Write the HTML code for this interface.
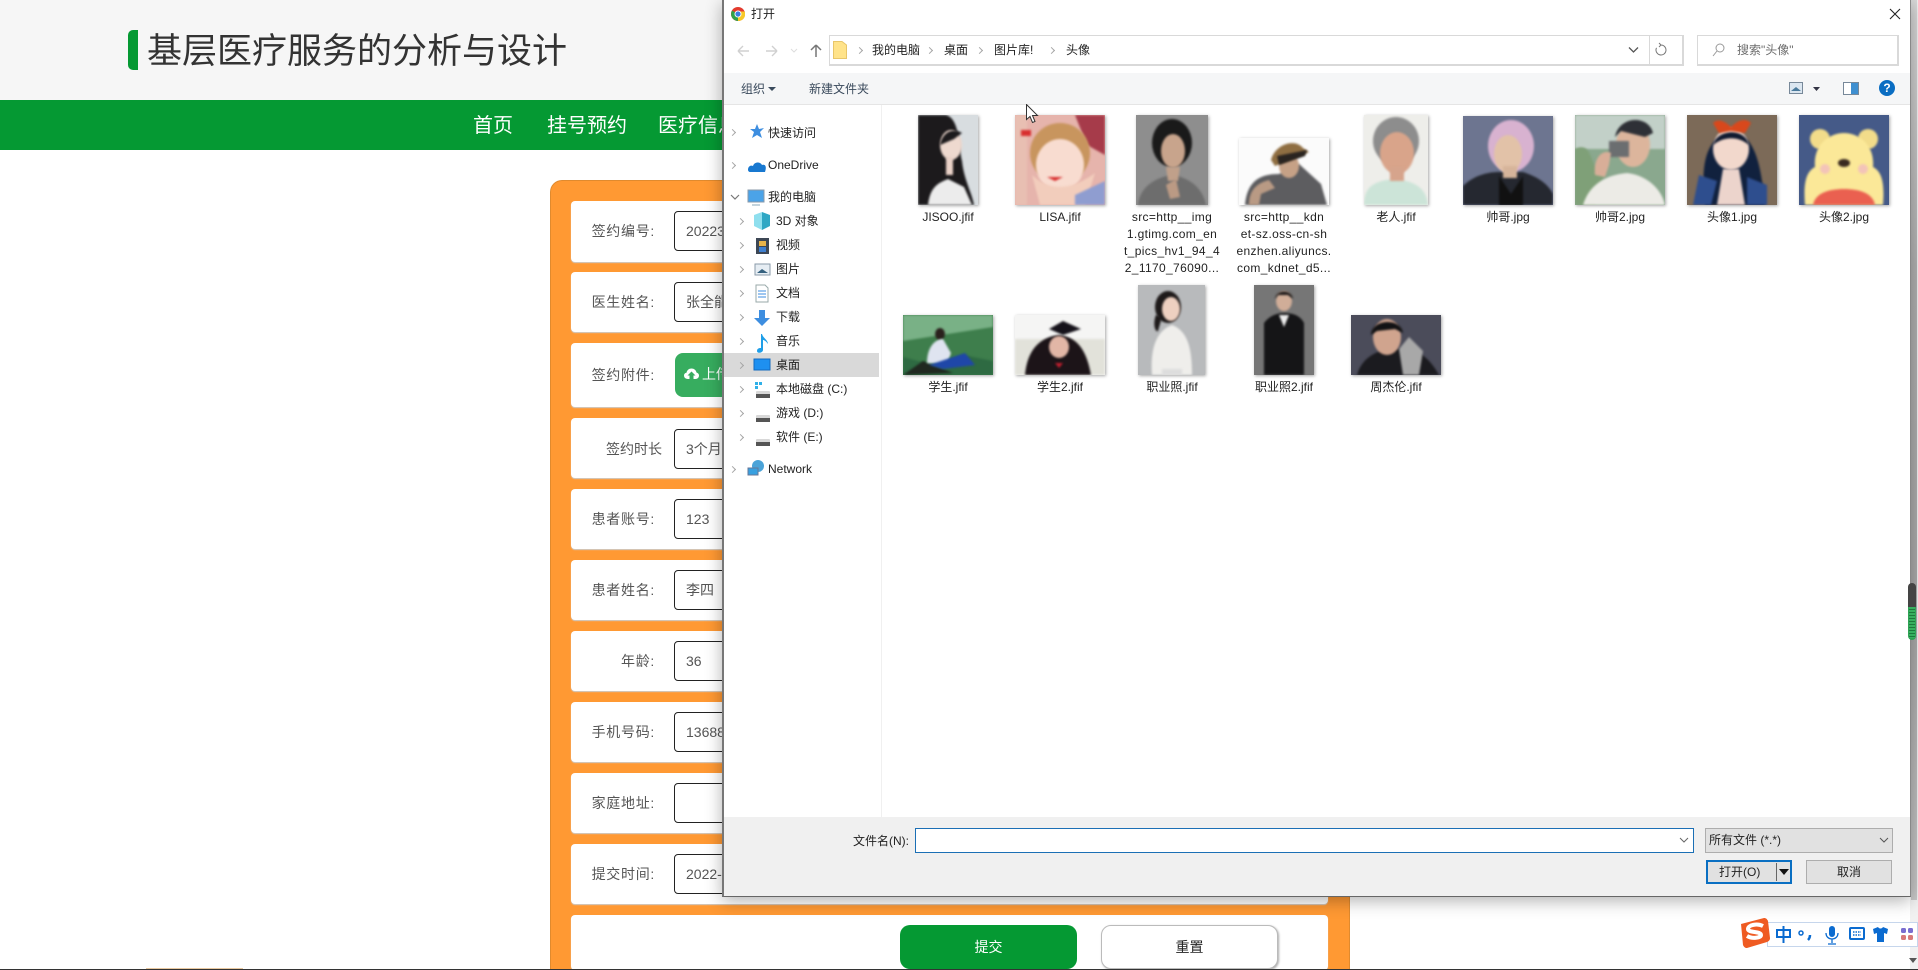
<!DOCTYPE html>
<html lang="zh"><head><meta charset="utf-8"><title>打开</title>
<style>
*{box-sizing:border-box;margin:0;padding:0}
html,body{width:1918px;height:970px;overflow:hidden;background:#fff;font-family:"Liberation Sans","Noto Sans CJK SC",sans-serif}
.a{position:absolute}
.t{position:absolute;white-space:nowrap;line-height:1}
.row{position:absolute;left:571px;width:757px;background:#fff;border-radius:4px;box-shadow:0 1px 1px #ccc}
.lab{position:absolute;font-size:14px;color:#555;white-space:nowrap;line-height:20px;width:92px;text-align:right;left:563px;letter-spacing:.7px}
.inp{position:absolute;left:674px;width:300px;height:40px;border:1px solid #222;border-radius:4px;background:#fff;font-size:14px;color:#555;padding-left:11px;line-height:38px;white-space:nowrap}
#dlg{position:absolute;left:722px;top:0;width:1189px;height:897px;background:#fff;border-left:2px solid #777;border-bottom:1px solid #666;border-right:1px solid #888;box-shadow:0 4px 16px rgba(0,0,0,.3);font-family:"Liberation Sans","Noto Sans CJK SC",sans-serif;font-size:12px;color:#222}
.n{position:absolute;font-size:12px;line-height:16px;color:#222;white-space:nowrap}
.ch{position:absolute;width:5px;height:5px;border-top:1px solid #a6a6a6;border-right:1px solid #a6a6a6;transform:rotate(45deg)}
.th{position:absolute;box-shadow:1px 1px 3px rgba(0,0,0,.35)}
.th>*{filter:blur(1px)}
.th>rect:first-child{filter:none}
.cap{position:absolute;width:112px;text-align:center;font-size:12px;line-height:17px;color:#222;white-space:nowrap}
.lng{letter-spacing:.35px}
</style></head><body>
<!-- page header -->
<div class="a" style="left:0;top:0;width:1918px;height:100px;background:#f6f6f6"></div>
<div class="a" style="left:128px;top:30px;width:10px;height:40px;background:#059933;border-radius:5px 0 0 5px"></div>
<div class="t" style="left:147px;top:34px;font-size:35px;line-height:36px;color:#333">基层医疗服务的分析与设计</div>
<div class="a" style="left:0;top:100px;width:1918px;height:50px;background:#059933"></div>
<div class="t" style="left:473px;top:115px;font-size:20px;line-height:22px;color:#fff">首页</div>
<div class="t" style="left:547px;top:115px;font-size:20px;line-height:22px;color:#fff">挂号预约</div>
<div class="t" style="left:658px;top:115px;font-size:20px;line-height:22px;color:#fff">医疗信息</div>
<!-- form panel -->
<div class="a" style="left:550px;top:180px;width:800px;height:790px;background:#ff9933;border-radius:12px 12px 0 0;border:1px solid #e08a2e;border-bottom:none"></div>
<div class="row" style="top:201px;height:61px"></div>
<div class="row" style="top:272px;height:60px"></div>
<div class="row" style="top:343px;height:64px"></div>
<div class="row" style="top:418px;height:60px"></div>
<div class="row" style="top:489px;height:60px"></div>
<div class="row" style="top:560px;height:60px"></div>
<div class="row" style="top:631px;height:60px"></div>
<div class="row" style="top:702px;height:60px"></div>
<div class="row" style="top:773px;height:60px"></div>
<div class="row" style="top:844px;height:60px"></div>
<div class="row" style="top:915px;height:55px"></div>
<div class="lab" style="top:221px">签约编号:</div><div class="inp" style="top:211px">20223</div>
<div class="lab" style="top:292px">医生姓名:</div><div class="inp" style="top:282px">张全能</div>
<div class="lab" style="top:365px">签约附件:</div>
<div class="a" style="left:675px;top:353px;width:120px;height:44px;background:#37ad5f;border-radius:8px"></div>
<svg class="a" style="left:684px;top:368px" width="15" height="13" viewBox="0 0 15 13"><path d="M4 11C1 11 0 9 0 7.500C0 6 1 5 2.500 4.800C3 2 5 0.500 7.500 0.500C10 0.500 12 2 12.500 4.500C14 5 15 6 15 7.500C15 9.500 13.500 11 11.500 11H9.500V7.500H11.500L7.500 3.500L3.500 7.500H5.500V11Z" fill="#fff"/></svg>
<div class="t" style="left:702px;top:367px;font-size:14px;color:#fff">上传</div>
<div class="lab" style="top:439px;left:570px;letter-spacing:0">签约时长</div><div class="inp" style="top:429px">3个月</div>
<div class="lab" style="top:509px">患者账号:</div><div class="inp" style="top:499px">123</div>
<div class="lab" style="top:580px">患者姓名:</div><div class="inp" style="top:570px">李四</div>
<div class="lab" style="top:651px">年龄:</div><div class="inp" style="top:641px">36</div>
<div class="lab" style="top:722px">手机号码:</div><div class="inp" style="top:712px">13688</div>
<div class="lab" style="top:793px">家庭地址:</div><div class="inp" style="top:783px"></div>
<div class="lab" style="top:864px">提交时间:</div><div class="inp" style="top:854px">2022-</div>
<div class="a" style="left:900px;top:925px;width:177px;height:44px;background:#059933;border-radius:10px;color:#fff;font-size:14px;text-align:center;line-height:44px">提交</div>
<div class="a" style="left:1101px;top:925px;width:177px;height:44px;background:#fff;border:1px solid #bbb;border-radius:10px;box-shadow:1px 1px 2px #aaa;color:#222;font-size:14px;text-align:center;line-height:42px">重置</div>
<!-- page scrollbar -->
<div class="a" style="left:1910px;top:0;width:8px;height:970px;background:#f1f1f1"></div>
<div class="a" style="left:1911px;top:0;width:6px;height:900px;background:linear-gradient(#d8d8d8,#b0b0b0 30%,#a8a8a8 70%,#c8c8c8)"></div>
<div class="a" style="left:1908px;top:583px;width:8px;height:57px;border-radius:4px;background:linear-gradient(#444 0,#444 42%,#2fa355 42%,#2fa355 100%);z-index:3"></div>
<div class="a" style="left:1909px;top:607px;width:6px;height:31px;background:repeating-linear-gradient(#37b060 0 2px,#1d7a3d 2px 3px);z-index:4"></div>
<div class="a" style="left:1909px;top:958px;width:0;height:0;border:4px solid transparent;border-top:5px solid #555"></div>
<!-- bottom line -->
<div class="a" style="left:0;top:969px;width:1918px;height:1px;background:#333;z-index:9"></div>
<div class="a" style="left:146px;top:968px;width:97px;height:1px;background:#e8c8a0;z-index:9"></div>
<!-- dialog -->
<div id="dlg">
<svg class="a" style="left:7px;top:7px" width="14" height="14" viewBox="0 0 14 14"><circle cx="7" cy="7" r="7" fill="#e33b2e"/><path d="M7 7L1 3.500A7 7 0 0 0 7 14Z" fill="#2fa24a"/><path d="M7 7V14A7 7 0 0 0 13.800 4.500H7Z" fill="#f7c829"/><circle cx="7" cy="7" r="3.500" fill="#fff"/><circle cx="7" cy="7" r="2.600" fill="#3b7de0"/></svg>
<div class="n" style="left:27px;top:6px">打开</div>
<svg class="a" style="left:1164px;top:7px" width="14" height="14" viewBox="0 0 14 14"><path d="M2 2L12 12M12 2L2 12" stroke="#222" stroke-width="1.100"/></svg>
<!-- nav row -->
<svg class="a" style="left:12px;top:42px" width="90" height="18" viewBox="0 0 90 18"><path d="M2 9H13M2 9L7 4M2 9L7 14" stroke="#d0d0d0" stroke-width="1.400" fill="none"/><path d="M30 9H41M41 9L36 4M41 9L36 14" stroke="#d0d0d0" stroke-width="1.400" fill="none"/><path d="M55 7L58 10L61 7" stroke="#ddd" fill="none"/><path d="M74 15V3M74 3L69 8M74 3L79 8" stroke="#777" stroke-width="1.500" fill="none" transform="translate(6 0)"/></svg>
<div class="a" style="left:105px;top:35px;width:855px;height:31px;border:1px solid #d9d9d9;border-width:1px 2px 2px 1px;background:#fff"></div>
<div class="a" style="left:925px;top:35px;width:1px;height:31px;background:#d9d9d9"></div>
<div class="a" style="left:973px;top:35px;width:202px;height:31px;border:1px solid #d9d9d9;border-width:1px 2px 2px 1px"></div>
<svg class="a" style="left:109px;top:41px" width="14" height="18" viewBox="0 0 14 18"><path d="M.5 .5H9L13.500 4V17.500H.5Z" fill="#ffe38a" stroke="#e8c66a"/></svg>
<div class="ch" style="left:133px;top:48px"></div><div class="n" style="left:148px;top:42px">我的电脑</div>
<div class="ch" style="left:203px;top:48px"></div><div class="n" style="left:220px;top:42px">桌面</div>
<div class="ch" style="left:253px;top:48px"></div><div class="n" style="left:270px;top:42px">图片库!</div>
<div class="ch" style="left:325px;top:48px"></div><div class="n" style="left:342px;top:42px">头像</div>
<svg class="a" style="left:904px;top:46px" width="11" height="8" viewBox="0 0 11 8"><path d="M1 1.500L5.500 6L10 1.500" stroke="#555" stroke-width="1.300" fill="none"/></svg>
<svg class="a" style="left:931px;top:42px" width="12" height="15" viewBox="0 0 12 15"><path d="M6 3A5 5 0 1 1 1.500 5.800M6 3L4 1M6 3L4 5" stroke="#777" fill="none"/></svg>
<svg class="a" style="left:988px;top:43px" width="13" height="14" viewBox="0 0 13 14"><circle cx="8" cy="5" r="4" stroke="#999" fill="none"/><path d="M5 8L1 13" stroke="#999"/></svg>
<div class="n" style="left:1013px;top:42px;color:#6d6d6d">搜索"头像"</div>
<!-- toolbar -->
<div class="a" style="left:0;top:73px;width:1186px;height:32px;background:#f5f6f7;border-bottom:1px solid #e5e5e5"></div>
<div class="n" style="left:17px;top:81px;color:#3a4a5c">组织</div>
<div class="a" style="left:44px;top:87px;border:4px solid transparent;border-top:4px solid #3a4a5c"></div>
<div class="n" style="left:85px;top:81px;color:#3a4a5c">新建文件夹</div>
<svg class="a" style="left:1065px;top:80px" width="80" height="18" viewBox="0 0 80 18"><rect x=".5" y="2.500" width="13" height="11" fill="#dbe6f0" stroke="#789"/><path d="M2 11L7 7L12 11Z" fill="#4a7a9c"/><path d="M24 7H31L27.500 11Z" fill="#334"/><rect x="54.500" y="2.500" width="15" height="12" fill="#fff" stroke="#789"/><rect x="62" y="3" width="7" height="11" fill="#3e8fd0"/></svg>
<div class="a" style="left:1155px;top:80px;width:16px;height:16px;border-radius:50%;background:#0a6dc2;color:#fff;font-size:12px;font-weight:bold;line-height:16px;text-align:center">?</div>
<!-- nav pane -->
<div class="a" style="left:157px;top:105px;width:1px;height:712px;background:#f0f0f0"></div>
<div class="a" style="left:0;top:353px;width:155px;height:24px;background:#d9d9d9"></div>
<div class="ch" style="left:6px;top:130px"></div><div class="n" style="left:44px;top:125px">快速访问</div>
<div class="ch" style="left:6px;top:163px"></div><div class="n" style="left:44px;top:157px">OneDrive</div>
<svg class="a" style="left:6px;top:194px" width="10" height="7"><path d="M1 1L5 5L9 1" stroke="#777" fill="none" stroke-width="1.200"/></svg><div class="n" style="left:44px;top:189px">我的电脑</div>
<div class="ch" style="left:14px;top:219px"></div><div class="n" style="left:52px;top:213px">3D 对象</div>
<div class="ch" style="left:14px;top:243px"></div><div class="n" style="left:52px;top:237px">视频</div>
<div class="ch" style="left:14px;top:267px"></div><div class="n" style="left:52px;top:261px">图片</div>
<div class="ch" style="left:14px;top:291px"></div><div class="n" style="left:52px;top:285px">文档</div>
<div class="ch" style="left:14px;top:315px"></div><div class="n" style="left:52px;top:309px">下载</div>
<div class="ch" style="left:14px;top:339px"></div><div class="n" style="left:52px;top:333px">音乐</div>
<div class="ch" style="left:14px;top:363px"></div><div class="n" style="left:52px;top:357px">桌面</div>
<div class="ch" style="left:14px;top:387px"></div><div class="n" style="left:52px;top:381px">本地磁盘 (C:)</div>
<div class="ch" style="left:14px;top:411px"></div><div class="n" style="left:52px;top:405px">游戏 (D:)</div>
<div class="ch" style="left:14px;top:435px"></div><div class="n" style="left:52px;top:429px">软件 (E:)</div>
<div class="ch" style="left:6px;top:467px"></div><div class="n" style="left:44px;top:461px">Network</div>
<svg class="a" style="left:23px;top:122px" width="32" height="360" viewBox="0 0 32 360">
<path d="M10 2L12 7L17 6L13 10L15 16L10 13L5 16L7 10L3 7L8 7Z" fill="#3d8ee0"/>
<path d="M1 48C1 44 4 43 6 44C7 40 13 39 15 43C18 42 20 44 18 50H3C2 50 1 49 1 48Z" fill="#1878d0"/>
<rect x="1" y="68" width="16" height="12" fill="#4ba3e8" stroke="#89a"/><path d="M5 83H13" stroke="#8ab"/>
<g transform="translate(6 0)">
<path d="M9 90L17 93V104L9 108Z" fill="#2ea7c4"/><path d="M9 90L1 93V104L9 108Z" fill="#8fdfee"/>
<rect x="3" y="116" width="13" height="16" fill="#3d4755"/><rect x="6" y="119" width="7" height="5" fill="#e8b44a"/><rect x="6" y="125" width="7" height="5" fill="#3e7fd0"/>
<rect x="2" y="142" width="15" height="11" fill="#e6edf3" stroke="#8a9aa8"/><path d="M4 151L9 147L15 151Z" fill="#35617f"/>
<path d="M3 163H12L15 166V180H3Z" fill="#fff" stroke="#9aa"/><path d="M5 169H13M5 172H13M5 175H13" stroke="#3d8ee0"/>
<path d="M6 188H12V196H17L9 204L1 196H6Z" fill="#3d8ee0"/>
<path d="M9 212C10 216 15 218 15 222C13 219 11 218 10 218V228C10 231 4 232 4 229C4 226 7 226 8 226V212Z" fill="#1e9ee8"/>
<rect x="1" y="237" width="16" height="11" fill="#1e90f0" stroke="#146ac0"/>
<rect x="2" y="260" width="3" height="3" fill="#2fb0e8"/><rect x="6" y="260" width="3" height="3" fill="#2fb0e8"/><rect x="2" y="264" width="3" height="3" fill="#2fb0e8"/><rect x="3" y="269" width="14" height="6" rx="1" fill="#d8d8d8"/><rect x="3" y="272" width="14" height="4" fill="#555"/>
<rect x="3" y="293" width="14" height="6" rx="1" fill="#d8d8d8"/><rect x="3" y="296" width="14" height="4" fill="#555"/>
<rect x="3" y="317" width="14" height="6" rx="1" fill="#d8d8d8"/><rect x="3" y="320" width="14" height="4" fill="#555"/>
</g>
<circle cx="11" cy="344" r="6" fill="#4ba3d8"/><rect x="1" y="346" width="10" height="7" fill="#38a0e0" stroke="#679"/>
</svg>
<!-- thumbnails: row 1 -->
<svg class="th" style="left:194px;top:115px" width="60" height="90" viewBox="0 0 60 90"><rect width="60" height="90" fill="#d8dde0"/><path d="M0 90V0H28C42 4 40 30 44 46C46 65 54 78 56 90Z" fill="#1c1a1c"/><path d="M10 90C12 72 20 68 30 64L46 72L54 90Z" fill="#ececec"/><ellipse cx="33" cy="30" rx="11" ry="15" fill="#eed9cf"/><path d="M22 30C24 18 34 12 44 18L36 24Z" fill="#1c1a1c"/><rect x="28" y="42" width="7" height="18" fill="#ead2c8"/></svg>
<svg class="th" style="left:291px;top:115px" width="90" height="90" viewBox="0 0 90 90"><rect width="90" height="90" fill="#e6b4ac"/><path d="M60 0H90V40L72 30Z" fill="#a63b4a"/><ellipse cx="45" cy="38" rx="30" ry="30" fill="#c8955e"/><ellipse cx="45" cy="50" rx="24" ry="26" fill="#f8dcd0"/><path d="M17 60C30 72 50 80 80 58L70 90H25Z" fill="#f2cdbc"/><path d="M60 80L90 66V90H60Z" fill="#8f9dd0"/><path d="M32 62H48L40 66Z" fill="#d83030"/><path d="M0 0H12V90H0Z" fill="#e8bfb2"/><path d="M6 15H16V21H6Z" fill="#d83030"/></svg>
<svg class="th" style="left:412px;top:115px" width="72" height="90" viewBox="0 0 72 90"><rect width="72" height="90" fill="#8e8e8e"/><path d="M2 90C4 70 22 62 36 60C50 62 66 70 70 90Z" fill="#6d6d6d"/><ellipse cx="36" cy="28" rx="20" ry="24" fill="#1a1a1a"/><ellipse cx="37" cy="36" rx="12" ry="17" fill="#c8a48c"/><path d="M30 52H44L42 66H32Z" fill="#c0a08a"/><path d="M30 70L40 64L44 82L34 84Z" fill="#bb9a84"/></svg>
<svg class="th" style="left:515px;top:138px" width="90" height="67" viewBox="0 0 90 67"><rect width="90" height="67" fill="#fbfbfb"/><path d="M6 67C8 44 20 36 40 36L60 26L82 46L88 67Z" fill="#5d5d60"/><ellipse cx="50" cy="28" rx="10" ry="12" fill="#c6a186"/><path d="M32 22C36 6 56 0 64 10L70 14L36 28Z" fill="#8f6e42"/><path d="M38 18L68 12L66 18L40 27Z" fill="#2a2420"/><path d="M10 67C10 56 14 46 30 42L36 50L22 56L20 67Z" fill="#b99a84"/></svg>
<svg class="th" style="left:640px;top:115px" width="64" height="90" viewBox="0 0 64 90"><rect width="64" height="90" fill="#eeeeea"/><path d="M0 90C0 70 12 66 30 64C50 66 62 72 64 90Z" fill="#cce4d8"/><ellipse cx="32" cy="26" rx="23" ry="24" fill="#8d8d8d"/><ellipse cx="33" cy="38" rx="17" ry="21" fill="#d9a48a"/><rect x="26" y="52" width="14" height="14" fill="#d6a48c"/></svg>
<svg class="th" style="left:739px;top:116px" width="90" height="89" viewBox="0 0 90 89"><rect width="90" height="89" fill="#6d7590"/><path d="M0 89V70C10 60 24 56 36 56L60 56C72 60 84 66 90 78V89Z" fill="#252830"/><path d="M36 60L48 78L60 60L60 89H36Z" fill="#111"/><ellipse cx="48" cy="30" rx="23" ry="26" fill="#d8b2d0"/><ellipse cx="45" cy="38" rx="14" ry="19" fill="#e2c2a8"/><rect x="40" y="50" width="14" height="12" fill="#d6b49a"/></svg>
<svg class="th" style="left:851px;top:115px" width="90" height="90" viewBox="0 0 90 90"><rect width="90" height="90" fill="#8aa88e"/><rect width="90" height="34" fill="#c2d0c8"/><path d="M0 34C20 24 14 60 30 56L20 90H0Z" fill="#7fa078"/><path d="M8 90C14 70 30 60 52 58C70 60 86 72 90 90Z" fill="#ecebe6"/><ellipse cx="58" cy="30" rx="17" ry="22" fill="#dcb59c"/><path d="M40 22C44 0 74 0 78 18L70 22L46 16Z" fill="#2e3036"/><rect x="34" y="26" width="20" height="16" fill="#6b6e70"/><path d="M20 60C18 42 28 34 36 38L34 50L30 62Z" fill="#d8ae98"/></svg>
<svg class="th" style="left:963px;top:115px" width="90" height="90" viewBox="0 0 90 90"><rect width="90" height="90" fill="#7c6a58"/><path d="M18 90C14 54 16 24 44 16C70 20 74 54 78 90Z" fill="#11213e"/><ellipse cx="44" cy="34" rx="18" ry="21" fill="#f2d8cc"/><path d="M26 30C30 14 58 12 62 30C50 20 36 22 26 30Z" fill="#101a30"/><path d="M26 8C32 2 40 8 44 12C50 6 58 2 64 8L58 18L44 16L32 18Z" fill="#d8481c"/><path d="M36 54H52L58 90H30Z" fill="#ecd4cc"/><path d="M12 60L30 66L24 90H6Z" fill="#2e4e8e"/><path d="M60 62L80 70V90H60Z" fill="#2e4e8e"/></svg>
<svg class="th" style="left:1075px;top:115px" width="90" height="90" viewBox="0 0 90 90"><rect width="90" height="90" fill="#455a88"/><circle cx="21" cy="24" r="10" fill="#f2dc8a"/><circle cx="69" cy="24" r="10" fill="#f2dc8a"/><path d="M6 90C4 66 8 56 16 52C14 30 30 18 45 18C60 18 76 30 74 52C82 56 86 66 84 90Z" fill="#fbe898"/><path d="M14 90C16 78 30 74 45 74C60 74 74 78 76 90Z" fill="#ea6050"/><ellipse cx="45" cy="48" rx="6" ry="4" fill="#3a2a20"/><circle cx="26" cy="54" r="5" fill="#f3c4b8"/><circle cx="64" cy="54" r="5" fill="#f3c4b8"/></svg>
<!-- thumbnails: row 2 -->
<svg class="th" style="left:179px;top:315px" width="90" height="60" viewBox="0 0 90 60"><rect width="90" height="60" fill="#3e7e4c"/><path d="M0 0H90V12L0 26Z" fill="#79b186"/><path d="M0 60V42L30 50L60 40L90 46V60Z" fill="#2e6a42"/><path d="M0 60L20 46L50 58Z" fill="#202820"/><ellipse cx="37" cy="19" rx="5" ry="6" fill="#2a211d"/><path d="M24 48C24 32 32 24 40 24L48 38L44 50Z" fill="#dfe4f0"/><path d="M26 50L62 38L72 50L40 54Z" fill="#1f47a8"/></svg>
<svg class="th" style="left:291px;top:315px" width="90" height="60" viewBox="0 0 90 60"><rect width="90" height="60" fill="#f5f5f4"/><rect y="24" width="90" height="36" fill="#e2e2da"/><path d="M10 60C12 36 24 22 44 20C64 22 72 38 76 60Z" fill="#1c1418"/><ellipse cx="44" cy="32" rx="10" ry="11" fill="#e2b6a6"/><path d="M34 14L48 6L66 14L48 20Z" fill="#15121a"/><path d="M40 48H48L44 53Z" fill="#c01e2e"/></svg>
<svg class="th" style="left:414px;top:285px" width="67" height="90" viewBox="0 0 67 90"><rect width="67" height="90" fill="#b8babc"/><path d="M14 90C12 64 18 46 34 40C50 46 54 64 54 90Z" fill="#efeeeb"/><ellipse cx="30" cy="22" rx="13" ry="16" fill="#1e1a1a"/><ellipse cx="33" cy="24" rx="9" ry="12" fill="#eed0c0"/><path d="M18 30C14 40 18 48 20 46L24 32Z" fill="#1e1a1a"/><rect x="24" y="84" width="20" height="6" fill="#ddd"/></svg>
<svg class="th" style="left:530px;top:285px" width="60" height="90" viewBox="0 0 60 90"><rect width="60" height="90" fill="#767676"/><path d="M10 90V38C16 30 24 28 30 28C38 28 46 30 50 38V90Z" fill="#151517"/><path d="M25 30L30 42L35 30Z" fill="#eee"/><ellipse cx="30" cy="16" rx="8" ry="10" fill="#d0ad98"/><path d="M21 14C22 4 38 4 39 14L34 10H24Z" fill="#1c1a1a"/></svg>
<svg class="th" style="left:627px;top:315px" width="90" height="60" viewBox="0 0 90 60"><rect width="90" height="60" fill="#4b4c5a"/><path d="M6 60C10 46 20 38 36 34H58C72 38 80 46 88 60Z" fill="#1b1b1f"/><path d="M48 34L58 22L72 36L68 60H52Z" fill="#a8a8a8"/><ellipse cx="36" cy="22" rx="14" ry="18" fill="#d0a48e"/><path d="M20 20C20 4 50 2 52 18L44 14L26 16Z" fill="#121214"/></svg>
<!-- captions -->
<div class="cap" style="left:168px;top:209px">JISOO.jfif</div>
<div class="cap" style="left:280px;top:209px">LISA.jfif</div>
<div class="cap lng" style="left:392px;top:209px">src=http__img<br>1.gtimg.com_en<br>t_pics_hv1_94_4<br>2_1170_76090...</div>
<div class="cap lng" style="left:504px;top:209px">src=http__kdn<br>et-sz.oss-cn-sh<br>enzhen.aliyuncs.<br>com_kdnet_d5...</div>
<div class="cap" style="left:616px;top:209px">老人.jfif</div>
<div class="cap" style="left:728px;top:209px">帅哥.jpg</div>
<div class="cap" style="left:840px;top:209px">帅哥2.jpg</div>
<div class="cap" style="left:952px;top:209px">头像1.jpg</div>
<div class="cap" style="left:1064px;top:209px">头像2.jpg</div>
<div class="cap" style="left:168px;top:379px">学生.jfif</div>
<div class="cap" style="left:280px;top:379px">学生2.jfif</div>
<div class="cap" style="left:392px;top:379px">职业照.jfif</div>
<div class="cap" style="left:504px;top:379px">职业照2.jfif</div>
<div class="cap" style="left:616px;top:379px">周杰伦.jfif</div>
<!-- bottom -->
<div class="a" style="left:0;top:817px;width:1186px;height:79px;background:#f0f0f0"></div>
<div class="n" style="left:129px;top:833px">文件名(N):</div>
<div class="a" style="left:191px;top:828px;width:779px;height:25px;background:#fff;border:1px solid #1b6fb5"></div>
<svg class="a" style="left:955px;top:837px" width="10" height="7"><path d="M1 1L5 5L9 1" stroke="#666" fill="none"/></svg>
<div class="a" style="left:981px;top:828px;width:188px;height:25px;background:#e1e1e1;border:1px solid #adadad;padding-left:3px;line-height:23px;font-size:12px;color:#222">所有文件 (*.*)</div>
<svg class="a" style="left:1155px;top:837px" width="10" height="7"><path d="M1 1L5 5L9 1" stroke="#555" fill="none"/></svg>
<div class="a" style="left:982px;top:860px;width:86px;height:24px;background:#e1e1e1;border:2px solid #0a6fc2;line-height:20px;font-size:12px;padding-left:11px;color:#222">打开(O)</div>
<div class="a" style="left:1052px;top:863px;width:1px;height:18px;background:#666"></div>
<div class="a" style="left:1055px;top:869px;border:5px solid transparent;border-top:6px solid #111"></div>
<div class="a" style="left:1082px;top:860px;width:86px;height:24px;background:#e1e1e1;border:1px solid #adadad;line-height:22px;text-align:center;font-size:12px;color:#222">取消</div>
</div>
<!-- cursor -->
<svg class="a" style="left:1026px;top:104px;z-index:5" width="13" height="20" viewBox="0 0 13 20"><path d="M.5 .5V15.500L4 12.500L6.500 18.500L9 17.500L6.500 11.500H11.500Z" fill="#fff" stroke="#333"/></svg>
<!-- sogou -->
<div class="a" style="left:1767px;top:922px;width:151px;height:25px;background:#fff;border:1px solid #c6d6ec;z-index:5"></div>
<svg class="a" style="left:1739px;top:917px;z-index:6" width="32" height="32" viewBox="0 0 32 32"><path d="M2 7L25 1C27 1 28 2 29 4L31 21C31 23 30 24 28 25L8 31C6 31 5 30 4 28Z" fill="#ef5b22"/><path d="M24 9C18 6 9 8 9 12C9 16 22 14 22 18C22 21 13 22 8 19" stroke="#fff" stroke-width="4" fill="none"/></svg>
<svg class="a" style="left:1773px;top:924px;z-index:6" width="145" height="22" viewBox="0 0 145 22"><g fill="none" stroke="#0b6bd0" stroke-width="2"><rect x="4" y="6" width="13" height="7"/><path d="M10.500 2V19"/></g><circle cx="28" cy="9" r="2" fill="none" stroke="#0b6bd0" stroke-width="1.500"/><path d="M37 11C37 14 36 15 35 16" stroke="#0b6bd0" stroke-width="2.500" fill="none"/><rect x="56" y="2" width="6" height="11" rx="3" fill="#0b6bd0"/><path d="M53 9C53 17 65 17 65 9M59 15V19M55 20H63" stroke="#0b6bd0" stroke-width="1.300" fill="none"/><rect x="77" y="4" width="14" height="11" rx="1" fill="none" stroke="#0b6bd0" stroke-width="2"/><path d="M80 8H88M80 11H88" stroke="#0b6bd0" stroke-dasharray="1.500 1" stroke-width="1.500"/><path d="M100 5L105 3C106 5 109 5 110 3L115 5L114 10L111 9V18H104V9L101 10Z" fill="#0b6bd0"/><rect x="128" y="4" width="5" height="5" rx="1.500" fill="#7a6ed0"/><rect x="135" y="4" width="5" height="5" rx="1.500" fill="#7a6ed0"/><rect x="128" y="11" width="5" height="5" rx="1.500" fill="#d87a7a"/><rect x="135" y="11" width="5" height="5" rx="1.500" fill="#d87a7a"/></svg>
</body></html>
